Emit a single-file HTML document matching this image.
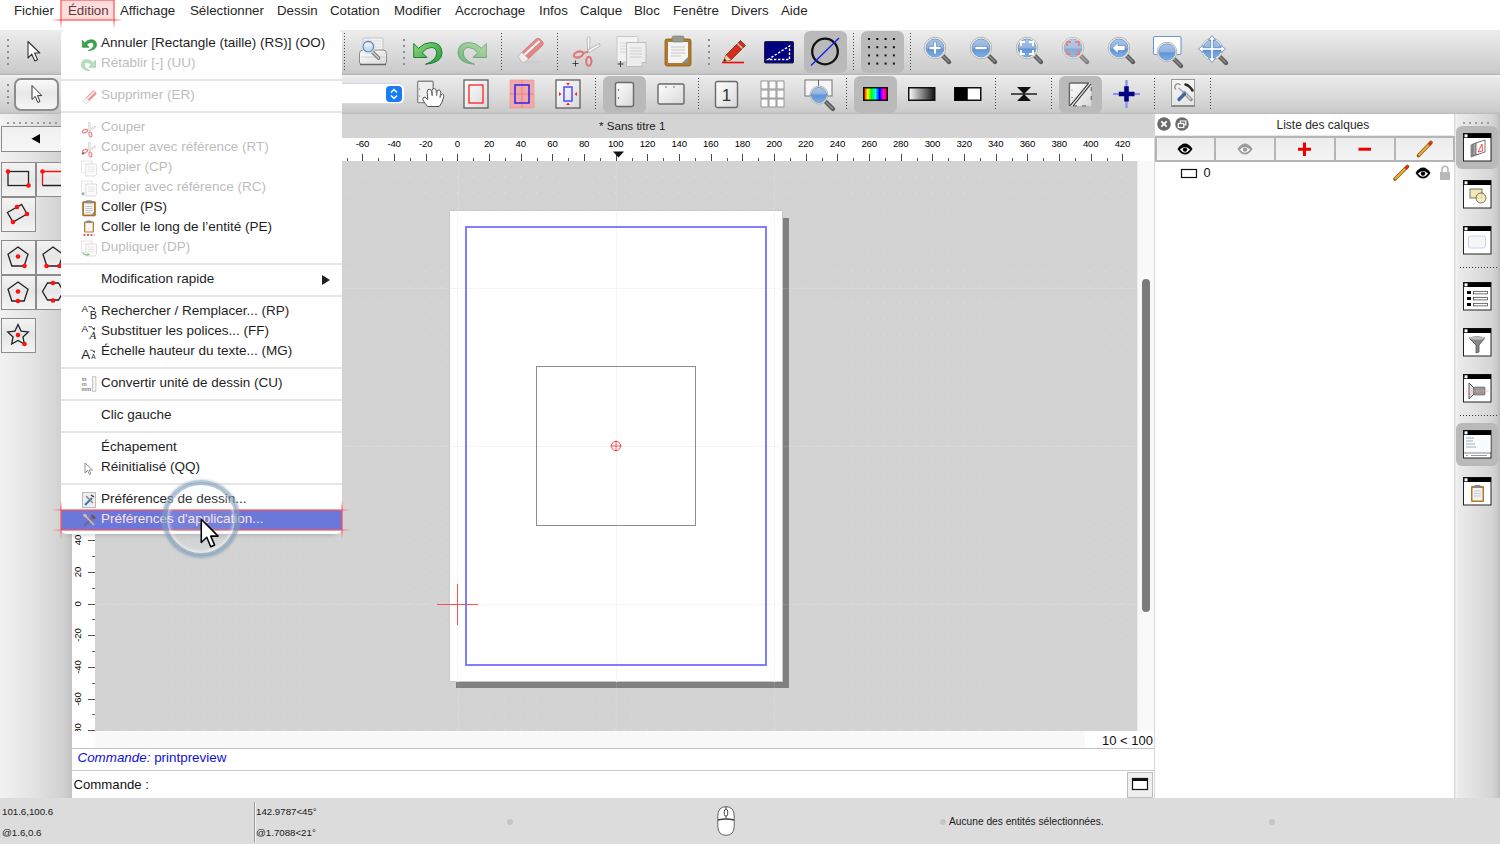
<!DOCTYPE html><html><head><meta charset="utf-8"><style>
*{margin:0;padding:0;box-sizing:border-box}
html,body{width:1500px;height:844px;overflow:hidden;background:#e6e6e6;font-family:"Liberation Sans",sans-serif;position:relative}
.a{position:absolute}
svg{position:absolute;overflow:visible}
.t{position:absolute;white-space:pre;line-height:1}
</style></head><body><div class="a" style="left:0px;top:0px;width:1500px;height:30px;background:#fff"></div><div class="a" style="left:0px;top:30px;width:1500px;height:45px;background:linear-gradient(#ededed,#dfdfdf 40%,#cdcdcd 90%,#c4c4c4);border-bottom:1px solid #b3b3b3"></div><div class="a" style="left:0px;top:75px;width:1500px;height:39px;background:linear-gradient(#f4f4f4,#e9e9e9 8%,#dcdcdc 50%,#cbcbcb 94%,#b9b9b9)"></div><svg style="left:0px;top:0px;" width="1" height="1" viewBox="0 0 1 1"><defs><linearGradient id="lg" x1="0" y1="0" x2="0" y2="1"><stop offset="0" stop-color="#a9c4e8"/><stop offset=".5" stop-color="#8fb2e0"/><stop offset=".55" stop-color="#5f93d6"/><stop offset="1" stop-color="#7fb0ea"/></linearGradient><linearGradient id="pg" x1="0" y1="0" x2="1" y2="1"><stop offset="0" stop-color="#fff"/><stop offset="1" stop-color="#d8d8d8"/></linearGradient></defs></svg><div class="a" style="left:7px;top:39px;width:2px;height:2px;background:#8d8d8d"></div><div class="a" style="left:7px;top:45px;width:2px;height:2px;background:#8d8d8d"></div><div class="a" style="left:7px;top:51px;width:2px;height:2px;background:#8d8d8d"></div><div class="a" style="left:7px;top:57px;width:2px;height:2px;background:#8d8d8d"></div><div class="a" style="left:7px;top:63px;width:2px;height:2px;background:#8d8d8d"></div><svg style="left:25px;top:40px;" width="16" height="24" viewBox="0 0 16 24"><path d="M3 1.5 L3 18 L6.8 14.2 L9.8 21 L12.6 19.8 L9.6 13 L14.8 13Z" fill="#fff" stroke="#333" stroke-width="1.1" stroke-linejoin="round"/></svg><div class="a" style="left:344px;top:33px;width:1px;height:39px;background:repeating-linear-gradient(#222 0 1px,transparent 1px 3px);opacity:.8"></div><div class="a" style="left:501px;top:33px;width:1px;height:39px;background:repeating-linear-gradient(#222 0 1px,transparent 1px 3px);opacity:.8"></div><div class="a" style="left:557px;top:33px;width:1px;height:39px;background:repeating-linear-gradient(#222 0 1px,transparent 1px 3px);opacity:.8"></div><div class="a" style="left:853px;top:33px;width:1px;height:39px;background:repeating-linear-gradient(#222 0 1px,transparent 1px 3px);opacity:.8"></div><div class="a" style="left:910px;top:33px;width:1px;height:39px;background:repeating-linear-gradient(#222 0 1px,transparent 1px 3px);opacity:.8"></div><div class="a" style="left:403px;top:39px;width:2px;height:2px;background:#8d8d8d"></div><div class="a" style="left:403px;top:45px;width:2px;height:2px;background:#8d8d8d"></div><div class="a" style="left:403px;top:51px;width:2px;height:2px;background:#8d8d8d"></div><div class="a" style="left:403px;top:57px;width:2px;height:2px;background:#8d8d8d"></div><div class="a" style="left:403px;top:63px;width:2px;height:2px;background:#8d8d8d"></div><div class="a" style="left:708px;top:39px;width:2px;height:2px;background:#8d8d8d"></div><div class="a" style="left:708px;top:45px;width:2px;height:2px;background:#8d8d8d"></div><div class="a" style="left:708px;top:51px;width:2px;height:2px;background:#8d8d8d"></div><div class="a" style="left:708px;top:57px;width:2px;height:2px;background:#8d8d8d"></div><div class="a" style="left:708px;top:63px;width:2px;height:2px;background:#8d8d8d"></div><div class="a" style="left:804px;top:31px;width:43px;height:42px;background:#bababa;border-radius:6px"></div><div class="a" style="left:861px;top:31px;width:43px;height:42px;background:#bababa;border-radius:6px"></div><svg style="left:357px;top:35px;" width="32" height="32" viewBox="0 0 32 32"><rect x="6" y="3" width="20" height="15" rx="1.5" fill="#f2f2f2" stroke="#c4c4c4"/><path d="M16 6h8 M16 9h8 M16 12h8" stroke="#ddd"/><path d="M2.5 18.5 Q2.5 15 6 15 L26 15 Q29.5 15 29.5 18.5 L29.5 27 Q29.5 29.5 27 29.5 L5 29.5 Q2.5 29.5 2.5 27Z" fill="url(#pg)" stroke="#8c8c8c"/><path d="M4 22 H28" stroke="#cfcfcf"/><path d="M3 29.5 H29" stroke="#666" stroke-width="1.5"/><line x1="15" y1="16.5" x2="21.5" y2="23" stroke="#666" stroke-width="3.6" stroke-linecap="round"/><line x1="15" y1="16.5" x2="21.5" y2="23" stroke="#c4c4c4" stroke-width="2" stroke-linecap="round"/><circle cx="11.3" cy="11.7" r="6.6" fill="#fafafa" stroke="#d0d0d0" stroke-width=".8"/><circle cx="11.3" cy="11.7" r="5.3" fill="#c9daf0" stroke="#4f86cc" stroke-width="1.1"/><ellipse cx="11" cy="10" rx="3.5" ry="2.2" fill="#e6eef8"/></svg><svg style="left:411px;top:37px;" width="32" height="30" viewBox="0 0 32 30"><defs><linearGradient id="ug" x1="0" y1="0" x2="1" y2="1"><stop offset="0" stop-color="#8fd77a"/><stop offset="1" stop-color="#1f9a3a"/></linearGradient></defs><path d="M2.7 6.5 L2.7 20.5 L16 20.5 L11.3 15.8 Q15.5 10.5 20 10.5 Q25.5 10.5 25.7 16 Q25.7 23 14.5 27.3 Q30.8 26 31 16 Q31 5.7 20 5.5 Q13 5.5 7.5 11.3Z" fill="url(#ug)" stroke="#16772c" stroke-width=".9" stroke-linejoin="round"/></svg><svg style="left:457px;top:37px;" width="32" height="30" viewBox="0 0 32 30"><g opacity=".55" transform="translate(32 0) scale(-1 1)"><path d="M2.7 6.5 L2.7 20.5 L16 20.5 L11.3 15.8 Q15.5 10.5 20 10.5 Q25.5 10.5 25.7 16 Q25.7 23 14.5 27.3 Q30.8 26 31 16 Q31 5.7 20 5.5 Q13 5.5 7.5 11.3Z" fill="url(#ug)" stroke="#16772c" stroke-width=".9" stroke-linejoin="round"/></g></svg><svg style="left:514px;top:36px;" width="32" height="30" viewBox="0 0 32 30"><g opacity=".75"><ellipse cx="17" cy="26" rx="12" ry="1.5" fill="#ccc"/><path d="M4 20 L22 3 Q24 1.5 26 3 L29 6 Q30 8 28.5 9.5 L11 26Z" fill="#e36a6a" stroke="#b34" stroke-width=".5"/><path d="M7.5 21.5 L25.5 5" stroke="#fff" stroke-width="2.2"/><path d="M4 20 L8 16.5 L14.5 23 L11 26 Q9.5 27 8 26Z" fill="#f6f6f6" stroke="#aaa" stroke-width=".6"/></g></svg><svg style="left:570px;top:35px;" width="32" height="34" viewBox="0 0 32 34"><g opacity=".9"><path d="M17 2.5 Q18.5 1.2 20 2.5 L19.6 16.5 L17.6 17Z" fill="#fbfbfb" stroke="#a8a8a8" stroke-width=".8"/><path d="M18 15 L29.5 8.5 L30 11 L19 17.5Z" fill="#fbfbfb" stroke="#a8a8a8" stroke-width=".8"/><ellipse cx="8.5" cy="19.5" rx="4.8" ry="2.8" transform="rotate(-18 8.5 19.5)" fill="none" stroke="#e07070" stroke-width="2.2"/><path d="M12.5 18 L18 17" stroke="#e07070" stroke-width="2"/><ellipse cx="18.8" cy="26.3" rx="2.6" ry="4.5" fill="none" stroke="#e07070" stroke-width="2.2"/></g><path d="M2.5 28.5 h6 M5.5 25.5 v6" stroke="#333" stroke-width=".9"/></svg><svg style="left:615px;top:35px;" width="34" height="34" viewBox="0 0 34 34"><g opacity=".85"><path d="M2 1.5 H22 L23 2.5 V27 H2Z" fill="#f6f6f6" stroke="#c4c4c4"/><path d="M5 8h14 M5 11h14 M5 14h14 M5 17h14" stroke="#d8d8d8"/><path d="M11.5 7.5 H31 V27.5 L27 31.5 H11.5Z" fill="#f2f2f2" stroke="#b6b6b6"/><path d="M27 31.5 V27.5 H31" fill="#ddd" stroke="#b6b6b6"/><path d="M15 13h12 M15 16h12 M15 19h12 M15 22h12" stroke="#cdcdcd"/></g><path d="M2.5 29 h6 M5.5 26 v6" stroke="#333" stroke-width=".9"/></svg><svg style="left:663px;top:35px;" width="30" height="32" viewBox="0 0 30 32"><rect x="2" y="4" width="26" height="27" rx="2" fill="#b07a2a" stroke="#8a5c18" stroke-width=".8"/><rect x="5" y="7" width="20" height="21" fill="#f4f4f4"/><path d="M8 12h14 M8 15h14 M8 18h14 M8 21h10" stroke="#c8c8c8"/><path d="M19 28 L25 22 L25 28Z" fill="#8a8a8a"/><rect x="9" y="1" width="12" height="6" rx="1.5" fill="#9a9a8a" stroke="#777" stroke-width=".6"/></svg><svg style="left:720px;top:40px;" width="28" height="26" viewBox="0 0 28 26"><path d="M2 22.5 h22" stroke="#f00" stroke-width="1.6"/><path d="M3.5 20.5 L6 14 L20.5 -0.5 L25.5 4.5 L11 19Z" fill="#d62b20" stroke="#6b3a10" stroke-width=".8" transform="translate(0 1)"/><path d="M3.5 21.5 L6 15 L11 20Z" fill="#f2d0a0"/><path d="M3.5 21.5 L4.5 18.5 L6.5 20.5Z" fill="#222"/><path d="M17.5 3.5 L22.5 8.5" stroke="#ccc" stroke-width="1.5"/></svg><svg style="left:764px;top:41px;" width="30" height="23" viewBox="0 0 30 23"><rect x=".5" y=".5" width="29" height="21.5" rx="1" fill="#000080" stroke="#223"/><path d="M4 18.5 L25.5 5 L25.5 18.5Z" fill="none" stroke="#fff" stroke-width="1.4" stroke-dasharray="2.4 1.6"/></svg><svg style="left:808px;top:35px;" width="34" height="34" viewBox="0 0 34 34"><circle cx="17" cy="16.5" r="12.8" fill="none" stroke="#111" stroke-width="2.3"/><line x1="3" y1="30.5" x2="31" y2="3" stroke="#1020f0" stroke-width="1.3"/></svg><svg style="left:868px;top:38px;" width="40" height="34" viewBox="0 0 40 34"><rect x="0.0" y="0.0" width="2" height="2" fill="#111"/><rect x="0.0" y="8.2" width="2" height="2" fill="#111"/><rect x="0.0" y="16.4" width="2" height="2" fill="#111"/><rect x="0.0" y="24.6" width="2" height="2" fill="#111"/><rect x="8.3" y="0.0" width="2" height="2" fill="#111"/><rect x="8.3" y="8.2" width="2" height="2" fill="#111"/><rect x="8.3" y="16.4" width="2" height="2" fill="#111"/><rect x="8.3" y="24.6" width="2" height="2" fill="#111"/><rect x="16.6" y="0.0" width="2" height="2" fill="#111"/><rect x="16.6" y="8.2" width="2" height="2" fill="#111"/><rect x="16.6" y="16.4" width="2" height="2" fill="#111"/><rect x="16.6" y="24.6" width="2" height="2" fill="#111"/><rect x="24.9" y="0.0" width="2" height="2" fill="#111"/><rect x="24.9" y="8.2" width="2" height="2" fill="#111"/><rect x="24.9" y="16.4" width="2" height="2" fill="#111"/><rect x="24.9" y="24.6" width="2" height="2" fill="#111"/></svg><svg style="left:921px;top:35px;" width="32" height="32" viewBox="0 0 32 32"><line x1="21" y1="20" x2="28" y2="27" stroke="#5a5a5a" stroke-width="4.4" stroke-linecap="round"/><line x1="21.5" y1="20.5" x2="27.5" y2="26.5" stroke="#8e8e8e" stroke-width="1.6" stroke-linecap="round"/><circle cx="14" cy="13" r="10.8" fill="#eeeeea" stroke="#b8b8b0" stroke-width="1"/><circle cx="14" cy="13" r="9" fill="url(#lg)" stroke="#6b95c8" stroke-width=".8"/><g transform="translate(14 13)"><path d="M-6 -1.5 h4.5 v-4.5 h3 v4.5 h4.5 v3 h-4.5 v4.5 h-3 v-4.5 h-4.5Z" fill="#fff" stroke="#3a6ab0" stroke-width=".5"/></g></svg><svg style="left:967px;top:35px;" width="32" height="32" viewBox="0 0 32 32"><line x1="21" y1="20" x2="28" y2="27" stroke="#5a5a5a" stroke-width="4.4" stroke-linecap="round"/><line x1="21.5" y1="20.5" x2="27.5" y2="26.5" stroke="#8e8e8e" stroke-width="1.6" stroke-linecap="round"/><circle cx="14" cy="13" r="10.8" fill="#eeeeea" stroke="#b8b8b0" stroke-width="1"/><circle cx="14" cy="13" r="9" fill="url(#lg)" stroke="#6b95c8" stroke-width=".8"/><g transform="translate(14 13)"><rect x="-6" y="-1.6" width="12" height="3.2" fill="#fff" stroke="#3a6ab0" stroke-width=".5"/></g></svg><svg style="left:1013px;top:35px;" width="32" height="32" viewBox="0 0 32 32"><line x1="21" y1="20" x2="28" y2="27" stroke="#5a5a5a" stroke-width="4.4" stroke-linecap="round"/><line x1="21.5" y1="20.5" x2="27.5" y2="26.5" stroke="#8e8e8e" stroke-width="1.6" stroke-linecap="round"/><circle cx="14" cy="13" r="10.8" fill="#eeeeea" stroke="#b8b8b0" stroke-width="1"/><circle cx="14" cy="13" r="9" fill="url(#lg)" stroke="#6b95c8" stroke-width=".8"/><g transform="translate(14 13)"><path d="M-6 -2 v-4 h4 M2 -6 h4 v4 M6 2 v4 h-4 M-2 6 h-4 v-4" fill="none" stroke="#fff" stroke-width="2"/></g></svg><svg style="left:1059px;top:35px;" width="32" height="32" viewBox="0 0 32 32"><g opacity=".7"><line x1="21" y1="20" x2="28" y2="27" stroke="#5a5a5a" stroke-width="4.4" stroke-linecap="round"/><line x1="21.5" y1="20.5" x2="27.5" y2="26.5" stroke="#8e8e8e" stroke-width="1.6" stroke-linecap="round"/><circle cx="14" cy="13" r="10.8" fill="#eeeeea" stroke="#b8b8b0" stroke-width="1"/><circle cx="14" cy="13" r="9" fill="url(#lg)" stroke="#6b95c8" stroke-width=".8"/><g transform="translate(14 13)"><path d="M-6 -2 v-4 h4 M2 -6 h4 v4 M6 2 v4 h-4 M-2 6 h-4 v-4" fill="none" stroke="#e46060" stroke-width="2"/></g></g></svg><svg style="left:1105px;top:35px;" width="32" height="32" viewBox="0 0 32 32"><line x1="21" y1="20" x2="28" y2="27" stroke="#5a5a5a" stroke-width="4.4" stroke-linecap="round"/><line x1="21.5" y1="20.5" x2="27.5" y2="26.5" stroke="#8e8e8e" stroke-width="1.6" stroke-linecap="round"/><circle cx="14" cy="13" r="10.8" fill="#eeeeea" stroke="#b8b8b0" stroke-width="1"/><circle cx="14" cy="13" r="9" fill="url(#lg)" stroke="#6b95c8" stroke-width=".8"/><g transform="translate(14 13)"><path d="M-6.5 0 L-1 -5.5 L-1 -2.5 L6 -2.5 L6 2.5 L-1 2.5 L-1 5.5Z" fill="#fff" stroke="#3a6ab0" stroke-width=".5"/></g></svg><svg style="left:1151px;top:35px;" width="32" height="32" viewBox="0 0 32 32"><rect x="2.5" y="1.5" width="27.5" height="18" rx="1.5" fill="#fff" stroke="#6a98d4" stroke-width="1.1"/><line x1="23" y1="24" x2="30" y2="31" stroke="#5a5a5a" stroke-width="4.4" stroke-linecap="round"/><line x1="23.5" y1="24.5" x2="29.5" y2="30.5" stroke="#8e8e8e" stroke-width="1.6" stroke-linecap="round"/><circle cx="16" cy="17" r="9.8" fill="#eeeeea" stroke="#b8b8b0" stroke-width="1"/><circle cx="16" cy="17" r="8.2" fill="url(#lg)" stroke="#6b95c8" stroke-width=".8"/></svg><svg style="left:1197px;top:35px;" width="32" height="32" viewBox="0 0 32 32"><line x1="22" y1="21" x2="29" y2="28" stroke="#5a5a5a" stroke-width="4.4" stroke-linecap="round"/><line x1="22.5" y1="21.5" x2="28.5" y2="27.5" stroke="#8e8e8e" stroke-width="1.6" stroke-linecap="round"/><circle cx="15" cy="14" r="10.8" fill="#eeeeea" stroke="#b8b8b0" stroke-width="1"/><circle cx="15" cy="14" r="9" fill="url(#lg)" stroke="#6b95c8" stroke-width=".8"/><g transform="translate(15 14)"><path d="M0 -13.5 L-3.5 -9 L-1.3 -9 L-1.3 -1.3 L-9 -1.3 L-9 -3.5 L-13.5 0 L-9 3.5 L-9 1.3 L-1.3 1.3 L-1.3 9 L-3.5 9 L0 13.5 L3.5 9 L1.3 9 L1.3 1.3 L9 1.3 L9 3.5 L13.5 0 L9 -3.5 L9 -1.3 L1.3 -1.3 L1.3 -9 L3.5 -9Z" fill="#fff" stroke="#4a7cc0" stroke-width=".7"/></g></svg><div class="a" style="left:7px;top:84px;width:2px;height:2px;background:#8d8d8d"></div><div class="a" style="left:7px;top:90px;width:2px;height:2px;background:#8d8d8d"></div><div class="a" style="left:7px;top:96px;width:2px;height:2px;background:#8d8d8d"></div><div class="a" style="left:7px;top:102px;width:2px;height:2px;background:#8d8d8d"></div><div class="a" style="left:14px;top:78px;width:45px;height:33px;border:2px solid #8c8c8c;border-radius:7px;background:linear-gradient(#fafafa,#e8e8e8 45%,#f6f6f6)"></div><svg style="left:30px;top:84px;" width="14" height="22" viewBox="0 0 14 22"><path d="M2 1.5 L2 15.5 L5.2 12.4 L7.8 18.5 L10 17.5 L7.5 11.6 L11.8 11.6Z" fill="#fff" stroke="#333" stroke-width="1" stroke-linejoin="round"/></svg><div class="a" style="left:330px;top:83px;width:74px;height:21px;background:#fff;border-radius:5px;border-top:1px solid #cfd8e2;border-bottom:1px solid #d6dde5"></div><div class="a" style="left:386px;top:86px;width:16px;height:16px;background:#1a7cf5;border-radius:4px"></div><svg style="left:386px;top:86px;" width="16" height="16" viewBox="0 0 16 16"><path d="M5 6.5 L8 3.5 L11 6.5 M5 9.5 L8 12.5 L11 9.5" fill="none" stroke="#fff" stroke-width="1.5"/></svg><div class="a" style="left:595px;top:78px;width:1px;height:33px;background:repeating-linear-gradient(#222 0 1px,transparent 1px 3px);opacity:.8"></div><div class="a" style="left:698px;top:78px;width:1px;height:33px;background:repeating-linear-gradient(#222 0 1px,transparent 1px 3px);opacity:.8"></div><div class="a" style="left:846px;top:78px;width:1px;height:33px;background:repeating-linear-gradient(#222 0 1px,transparent 1px 3px);opacity:.8"></div><div class="a" style="left:995px;top:78px;width:1px;height:33px;background:repeating-linear-gradient(#222 0 1px,transparent 1px 3px);opacity:.8"></div><div class="a" style="left:1051px;top:78px;width:1px;height:33px;background:repeating-linear-gradient(#222 0 1px,transparent 1px 3px);opacity:.8"></div><div class="a" style="left:1154px;top:78px;width:1px;height:33px;background:repeating-linear-gradient(#222 0 1px,transparent 1px 3px);opacity:.8"></div><div class="a" style="left:1210px;top:78px;width:1px;height:33px;background:repeating-linear-gradient(#222 0 1px,transparent 1px 3px);opacity:.8"></div><div class="a" style="left:603px;top:76px;width:43px;height:37px;background:#bababa;border-radius:6px"></div><div class="a" style="left:854px;top:76px;width:43px;height:37px;background:#bababa;border-radius:6px"></div><div class="a" style="left:1059px;top:76px;width:43px;height:37px;background:#bababa;border-radius:6px"></div><svg style="left:416px;top:80px;" width="30" height="30" viewBox="0 0 30 30"><rect x="1.6" y="1.2" width="15.6" height="21.4" rx="1" fill="#eeeeee" stroke="#8a8a8a" stroke-width="1.4"/><circle cx="3.6" cy="9" r=".6" fill="#555"/><circle cx="3.6" cy="16" r=".6" fill="#555"/><path d="M11.5 26.5 Q7.5 21.5 6.8 19.5 Q6.6 16.8 9 17.2 L11.8 19.5 L11.2 12.2 Q11 9.2 13.2 9.2 Q15.3 9.2 15.6 11.6 L16.2 15.5 L16 10.6 Q16 8.6 18 8.6 Q20 8.6 20.2 10.6 L20.6 15.5 L21 11.8 Q21.3 9.8 23.1 10 Q24.9 10.4 24.7 12.6 L24.1 17.5 Q25 13.6 26.6 13.9 Q28.2 14.3 27.7 16.8 Q26.6 22.5 23.3 26.5Z" fill="#fff" stroke="#555" stroke-width="1"/><path d="M15.6 11.6 L16.2 15.5 M20.2 10.6 L20.6 15.5 M24.7 12.6 L24.1 17.5" stroke="#888" stroke-width=".8"/></svg><svg style="left:463px;top:79px;" width="26" height="30" viewBox="0 0 26 30"><rect x="1" y="1" width="24" height="28" fill="url(#pg)" stroke="#555" stroke-width="1.2"/><rect x="6" y="6" width="14" height="18" fill="none" stroke="#f22" stroke-width="1.3"/></svg><svg style="left:509px;top:79px;" width="26" height="30" viewBox="0 0 26 30"><rect x="1" y="1" width="24" height="28" fill="#f2a8a8" stroke="#d98" stroke-width=".6"/><path d="M13 1 V29 M1 15 H25" stroke="#d88" stroke-width="1"/><rect x="6" y="6" width="14" height="18" fill="none" stroke="#1a1af0" stroke-width="1.4"/></svg><svg style="left:555px;top:79px;" width="26" height="30" viewBox="0 0 26 30"><rect x="1" y="1" width="24" height="28" fill="url(#pg)" stroke="#555" stroke-width="1.2"/><rect x="9" y="8" width="8" height="14" fill="none" stroke="#55f" stroke-width="1.6"/><path d="M11 4 h4 l-2 2.5Z M11 26 h4 l-2 -2.5Z M4 13 v4 l2.5 -2Z M22 13 v4 l-2.5 -2Z" fill="#f22"/></svg><svg style="left:614px;top:81px;" width="22" height="27" viewBox="0 0 22 27"><rect x="1.5" y="1.5" width="18" height="24" rx="2" fill="url(#pg)" stroke="#6a6a6a" stroke-width="1.4"/><circle cx="4.5" cy="9" r=".7" fill="#444"/><circle cx="4.5" cy="17" r=".7" fill="#444"/></svg><svg style="left:657px;top:83px;" width="28" height="22" viewBox="0 0 28 22"><rect x="1" y="1" width="26" height="20" rx="1.5" fill="url(#pg)" stroke="#6a6a6a" stroke-width="1.4"/><circle cx="9" cy="4" r=".7" fill="#444"/><circle cx="17" cy="4" r=".7" fill="#444"/></svg><svg style="left:714px;top:80px;" width="26" height="29" viewBox="0 0 26 29"><rect x="1.5" y="1.5" width="22" height="26" rx="2" fill="url(#pg)" stroke="#6a6a6a" stroke-width="1.4"/><text x="12.5" y="21" text-anchor="middle" font-family="Liberation Sans" font-size="17" fill="#333">1</text></svg><svg style="left:760px;top:80px;" width="26" height="29" viewBox="0 0 26 29"><rect x="1" y="1" width="7" height="8" fill="#fafafa" stroke="#8f8f8f" stroke-width=".9"/><rect x="1" y="10" width="7" height="8" fill="#fafafa" stroke="#8f8f8f" stroke-width=".9"/><rect x="1" y="19" width="7" height="8" fill="#fafafa" stroke="#8f8f8f" stroke-width=".9"/><rect x="9" y="1" width="7" height="8" fill="#fafafa" stroke="#8f8f8f" stroke-width=".9"/><rect x="9" y="10" width="7" height="8" fill="#fafafa" stroke="#8f8f8f" stroke-width=".9"/><rect x="9" y="19" width="7" height="8" fill="#fafafa" stroke="#8f8f8f" stroke-width=".9"/><rect x="17" y="1" width="7" height="8" fill="#fafafa" stroke="#8f8f8f" stroke-width=".9"/><rect x="17" y="10" width="7" height="8" fill="#fafafa" stroke="#8f8f8f" stroke-width=".9"/><rect x="17" y="19" width="7" height="8" fill="#fafafa" stroke="#8f8f8f" stroke-width=".9"/></svg><svg style="left:804px;top:79px;" width="32" height="32" viewBox="0 0 32 32"><rect x="1" y="1" width="27" height="16" fill="#f6f6f6" stroke="#666" stroke-width=".9"/><path d="M14.5 1 V17" stroke="#666"/><line x1="22" y1="23" x2="29" y2="30" stroke="#5a5a5a" stroke-width="4.4" stroke-linecap="round"/><line x1="22.5" y1="23.5" x2="28.5" y2="29.5" stroke="#8e8e8e" stroke-width="1.6" stroke-linecap="round"/><circle cx="15" cy="16" r="9" fill="#eeeeea" stroke="#b8b8b0" stroke-width="1"/><circle cx="15" cy="16" r="7.6" fill="url(#lg)" stroke="#6b95c8" stroke-width=".8"/><path d="M6 16 h18" stroke="#5d8fd0" stroke-width="1"/></svg><svg style="left:863px;top:87px;" width="25" height="15" viewBox="0 0 25 15"><defs><linearGradient id="sp"><stop offset="0" stop-color="#f00"/><stop offset=".17" stop-color="#ff0"/><stop offset=".33" stop-color="#0f0"/><stop offset=".5" stop-color="#0ff"/><stop offset=".67" stop-color="#00f"/><stop offset=".83" stop-color="#f0f"/><stop offset="1" stop-color="#f00"/></linearGradient></defs><rect x=".75" y=".75" width="23.5" height="12.5" fill="url(#sp)" stroke="#111" stroke-width="1.5"/></svg><svg style="left:908px;top:87px;" width="28" height="15" viewBox="0 0 28 15"><defs><linearGradient id="gr"><stop offset="0" stop-color="#fff"/><stop offset="1" stop-color="#111"/></linearGradient></defs><rect x=".75" y=".75" width="26" height="12.5" fill="url(#gr)" stroke="#111" stroke-width="1.5"/></svg><svg style="left:954px;top:87px;" width="28" height="15" viewBox="0 0 28 15"><rect x=".75" y=".75" width="26" height="12.5" fill="#fff" stroke="#111" stroke-width="1.5"/><rect x=".75" y=".75" width="13" height="12.5" fill="#000"/></svg><svg style="left:1010px;top:85px;" width="28" height="18" viewBox="0 0 28 18"><path d="M1 9 H27" stroke="#111" stroke-width="1.4"/><path d="M7 2 H21 L14 9 L21 16 H7 L14 9Z" fill="#111"/></svg><svg style="left:1068px;top:82px;" width="26" height="26" viewBox="0 0 26 26"><rect x="1.4" y="1" width="21.9" height="22.9" rx="1.5" fill="url(#pg)"/><path d="M1.4 23.9 V2.5 Q1.4 1 3 1 H21" fill="none" stroke="#666" stroke-width="1.4"/><path d="M23.3 5 V9 M23.3 14 V18 M18 23.9 H14 M9 23.9 H5" stroke="#777" stroke-width="1.4"/><path d="M2.2 23.6 L20.5 1.3 M5 24 L23 1.8" stroke="#333" stroke-width="1.1"/><circle cx="4" cy="8" r=".6" fill="#444"/><circle cx="4" cy="15.5" r=".6" fill="#444"/></svg><svg style="left:1112px;top:79px;" width="30" height="30" viewBox="0 0 30 30"><path d="M14.5 1 V29 M1 15 H28" stroke="#8c8cf6" stroke-width="2.2"/><path d="M14.5 7.3 V22.5 M6.8 15 H22.5" stroke="#000080" stroke-width="4.6"/></svg><div class="a" style="left:1171px;top:79px;width:24px;height:28px;background:linear-gradient(#f6f6f6,#e6e6e6);border:1px solid #9a9a9a;border-bottom:2px solid #8a8a8a"></div><svg style="left:1170px;top:78px;" width="27" height="30" viewBox="0 0 27 30"><line x1="14" y1="14.5" x2="21" y2="21.5" stroke="#8a8a8a" stroke-width="3.4" stroke-linecap="round"/><line x1="14" y1="14.5" x2="21" y2="21.5" stroke="#c8c8c8" stroke-width="2"/><path d="M15.5 6.5 Q19.5 7.5 22.5 12.5" fill="none" stroke="#2d2d2d" stroke-width="2.6" stroke-linecap="round"/><line x1="8.5" y1="10" x2="15" y2="15.5" stroke="#aaa" stroke-width="1.6"/><path d="M6 11.5 A3.2 3.2 0 1 1 10.5 7" fill="none" stroke="#999" stroke-width="1.6"/><line x1="9" y1="21.5" x2="14.5" y2="16" stroke="#3b66a8" stroke-width="3.2" stroke-linecap="round"/></svg><div class="a" style="left:0px;top:114px;width:72px;height:684px;background:linear-gradient(90deg,#f2f2f2,#e2e2e2 50%,#cfcfcf 90%,#c3c3c3)"></div><div class="a" style="left:72px;top:114px;width:1082px;height:24px;background:#d4d4d4"></div><div class="t" style="left:599px;top:119.87px;font-size:11.6px;color:#1a1a1a;">* Sans titre 1</div><div class="a" style="left:72px;top:138px;width:1082px;height:23px;background:#fff"></div><div class="a" style="left:72px;top:161px;width:23px;height:570px;background:#fff"></div><div class="a" style="left:95px;top:161px;width:1042px;height:570px;background:#d3d3d3"></div><div class="a" style="left:95px;top:161px;width:1042px;height:570px;background-image:radial-gradient(circle at 0.5px 0.5px,#e2e2e2 0.6px,transparent 0.8px);background-size:15.8125px 15.8125px;background-position:14.02px 15.16px"></div><div class="a" style="left:456px;top:218px;width:333px;height:470px;background:#808080"></div><div class="a" style="left:450px;top:211px;width:332px;height:470px;background:#fff;box-shadow:0 0 0 1px #c9c9c9"></div><div class="a" style="left:458px;top:161px;width:1px;height:570px;background:rgba(255,255,255,.1)"></div><div class="a" style="left:616px;top:161px;width:1px;height:570px;background:rgba(255,255,255,.1)"></div><div class="a" style="left:774px;top:161px;width:1px;height:570px;background:rgba(255,255,255,.1)"></div><div class="a" style="left:95px;top:288px;width:1042px;height:1px;background:rgba(255,255,255,.1)"></div><div class="a" style="left:95px;top:446px;width:1042px;height:1px;background:rgba(255,255,255,.1)"></div><div class="a" style="left:95px;top:604px;width:1042px;height:1px;background:rgba(255,255,255,.1)"></div><div class="a" style="left:457px;top:211px;width:1px;height:471px;background:#f5f5f5"></div><div class="a" style="left:616px;top:211px;width:1px;height:471px;background:#f5f5f5"></div><div class="a" style="left:774px;top:211px;width:1px;height:471px;background:#f5f5f5"></div><div class="a" style="left:450px;top:288px;width:332px;height:1px;background:#f5f5f5"></div><div class="a" style="left:450px;top:446px;width:332px;height:1px;background:#f5f5f5"></div><div class="a" style="left:450px;top:604px;width:332px;height:1px;background:#f5f5f5"></div><div class="a" style="left:465px;top:226px;width:302px;height:440px;border:2px solid #7e7eff"></div><div class="a" style="left:536px;top:366px;width:160px;height:160px;border:1.2px solid #8c8c8c"></div><svg style="left:609px;top:439px;" width="14" height="14" viewBox="0 0 14 14"><circle cx="7" cy="7" r="4.6" fill="none" stroke="#f04a4a" stroke-width="1"/><path d="M7 1.5 V12.5 M1.5 7 H12.5" stroke="#f04a4a" stroke-width=".9"/></svg><div class="a" style="left:437px;top:604px;width:41px;height:1px;background:#f25555"></div><div class="a" style="left:457px;top:584px;width:1px;height:41px;background:#f25555"></div><div class="a" style="left:331px;top:154px;width:1px;height:7px;background:#4a4a4a"></div><div class="t" style="left:300.7px;width:60px;text-align:center;top:139.1px;font-size:9.6px;color:#000;letter-spacing:-.2px">-80</div><div class="a" style="left:347px;top:158px;width:1px;height:3px;background:#5a5a5a"></div><div class="a" style="left:362px;top:154px;width:1px;height:7px;background:#4a4a4a"></div><div class="t" style="left:332.4px;width:60px;text-align:center;top:139.1px;font-size:9.6px;color:#000;letter-spacing:-.2px">-60</div><div class="a" style="left:378px;top:158px;width:1px;height:3px;background:#5a5a5a"></div><div class="a" style="left:394px;top:154px;width:1px;height:7px;background:#4a4a4a"></div><div class="t" style="left:364.1px;width:60px;text-align:center;top:139.1px;font-size:9.6px;color:#000;letter-spacing:-.2px">-40</div><div class="a" style="left:410px;top:158px;width:1px;height:3px;background:#5a5a5a"></div><div class="a" style="left:426px;top:154px;width:1px;height:7px;background:#4a4a4a"></div><div class="t" style="left:395.7px;width:60px;text-align:center;top:139.1px;font-size:9.6px;color:#000;letter-spacing:-.2px">-20</div><div class="a" style="left:442px;top:158px;width:1px;height:3px;background:#5a5a5a"></div><div class="a" style="left:457px;top:154px;width:1px;height:7px;background:#4a4a4a"></div><div class="t" style="left:427.4px;width:60px;text-align:center;top:139.1px;font-size:9.6px;color:#000;letter-spacing:-.2px">0</div><div class="a" style="left:473px;top:158px;width:1px;height:3px;background:#5a5a5a"></div><div class="a" style="left:489px;top:154px;width:1px;height:7px;background:#4a4a4a"></div><div class="t" style="left:459.1px;width:60px;text-align:center;top:139.1px;font-size:9.6px;color:#000;letter-spacing:-.2px">20</div><div class="a" style="left:505px;top:158px;width:1px;height:3px;background:#5a5a5a"></div><div class="a" style="left:521px;top:154px;width:1px;height:7px;background:#4a4a4a"></div><div class="t" style="left:490.7px;width:60px;text-align:center;top:139.1px;font-size:9.6px;color:#000;letter-spacing:-.2px">40</div><div class="a" style="left:537px;top:158px;width:1px;height:3px;background:#5a5a5a"></div><div class="a" style="left:552px;top:154px;width:1px;height:7px;background:#4a4a4a"></div><div class="t" style="left:522.4px;width:60px;text-align:center;top:139.1px;font-size:9.6px;color:#000;letter-spacing:-.2px">60</div><div class="a" style="left:568px;top:158px;width:1px;height:3px;background:#5a5a5a"></div><div class="a" style="left:584px;top:154px;width:1px;height:7px;background:#4a4a4a"></div><div class="t" style="left:554.1px;width:60px;text-align:center;top:139.1px;font-size:9.6px;color:#000;letter-spacing:-.2px">80</div><div class="a" style="left:600px;top:158px;width:1px;height:3px;background:#5a5a5a"></div><div class="a" style="left:616px;top:154px;width:1px;height:7px;background:#4a4a4a"></div><div class="t" style="left:585.7px;width:60px;text-align:center;top:139.1px;font-size:9.6px;color:#000;letter-spacing:-.2px">100</div><div class="a" style="left:632px;top:158px;width:1px;height:3px;background:#5a5a5a"></div><div class="a" style="left:647px;top:154px;width:1px;height:7px;background:#4a4a4a"></div><div class="t" style="left:617.4px;width:60px;text-align:center;top:139.1px;font-size:9.6px;color:#000;letter-spacing:-.2px">120</div><div class="a" style="left:663px;top:158px;width:1px;height:3px;background:#5a5a5a"></div><div class="a" style="left:679px;top:154px;width:1px;height:7px;background:#4a4a4a"></div><div class="t" style="left:649.1px;width:60px;text-align:center;top:139.1px;font-size:9.6px;color:#000;letter-spacing:-.2px">140</div><div class="a" style="left:695px;top:158px;width:1px;height:3px;background:#5a5a5a"></div><div class="a" style="left:711px;top:154px;width:1px;height:7px;background:#4a4a4a"></div><div class="t" style="left:680.7px;width:60px;text-align:center;top:139.1px;font-size:9.6px;color:#000;letter-spacing:-.2px">160</div><div class="a" style="left:727px;top:158px;width:1px;height:3px;background:#5a5a5a"></div><div class="a" style="left:742px;top:154px;width:1px;height:7px;background:#4a4a4a"></div><div class="t" style="left:712.4px;width:60px;text-align:center;top:139.1px;font-size:9.6px;color:#000;letter-spacing:-.2px">180</div><div class="a" style="left:758px;top:158px;width:1px;height:3px;background:#5a5a5a"></div><div class="a" style="left:774px;top:154px;width:1px;height:7px;background:#4a4a4a"></div><div class="t" style="left:744.1px;width:60px;text-align:center;top:139.1px;font-size:9.6px;color:#000;letter-spacing:-.2px">200</div><div class="a" style="left:790px;top:158px;width:1px;height:3px;background:#5a5a5a"></div><div class="a" style="left:806px;top:154px;width:1px;height:7px;background:#4a4a4a"></div><div class="t" style="left:775.7px;width:60px;text-align:center;top:139.1px;font-size:9.6px;color:#000;letter-spacing:-.2px">220</div><div class="a" style="left:822px;top:158px;width:1px;height:3px;background:#5a5a5a"></div><div class="a" style="left:837px;top:154px;width:1px;height:7px;background:#4a4a4a"></div><div class="t" style="left:807.4px;width:60px;text-align:center;top:139.1px;font-size:9.6px;color:#000;letter-spacing:-.2px">240</div><div class="a" style="left:853px;top:158px;width:1px;height:3px;background:#5a5a5a"></div><div class="a" style="left:869px;top:154px;width:1px;height:7px;background:#4a4a4a"></div><div class="t" style="left:839.1px;width:60px;text-align:center;top:139.1px;font-size:9.6px;color:#000;letter-spacing:-.2px">260</div><div class="a" style="left:885px;top:158px;width:1px;height:3px;background:#5a5a5a"></div><div class="a" style="left:901px;top:154px;width:1px;height:7px;background:#4a4a4a"></div><div class="t" style="left:870.7px;width:60px;text-align:center;top:139.1px;font-size:9.6px;color:#000;letter-spacing:-.2px">280</div><div class="a" style="left:917px;top:158px;width:1px;height:3px;background:#5a5a5a"></div><div class="a" style="left:932px;top:154px;width:1px;height:7px;background:#4a4a4a"></div><div class="t" style="left:902.4px;width:60px;text-align:center;top:139.1px;font-size:9.6px;color:#000;letter-spacing:-.2px">300</div><div class="a" style="left:948px;top:158px;width:1px;height:3px;background:#5a5a5a"></div><div class="a" style="left:964px;top:154px;width:1px;height:7px;background:#4a4a4a"></div><div class="t" style="left:934.1px;width:60px;text-align:center;top:139.1px;font-size:9.6px;color:#000;letter-spacing:-.2px">320</div><div class="a" style="left:980px;top:158px;width:1px;height:3px;background:#5a5a5a"></div><div class="a" style="left:996px;top:154px;width:1px;height:7px;background:#4a4a4a"></div><div class="t" style="left:965.7px;width:60px;text-align:center;top:139.1px;font-size:9.6px;color:#000;letter-spacing:-.2px">340</div><div class="a" style="left:1012px;top:158px;width:1px;height:3px;background:#5a5a5a"></div><div class="a" style="left:1027px;top:154px;width:1px;height:7px;background:#4a4a4a"></div><div class="t" style="left:997.4px;width:60px;text-align:center;top:139.1px;font-size:9.6px;color:#000;letter-spacing:-.2px">360</div><div class="a" style="left:1043px;top:158px;width:1px;height:3px;background:#5a5a5a"></div><div class="a" style="left:1059px;top:154px;width:1px;height:7px;background:#4a4a4a"></div><div class="t" style="left:1029.1px;width:60px;text-align:center;top:139.1px;font-size:9.6px;color:#000;letter-spacing:-.2px">380</div><div class="a" style="left:1075px;top:158px;width:1px;height:3px;background:#5a5a5a"></div><div class="a" style="left:1091px;top:154px;width:1px;height:7px;background:#4a4a4a"></div><div class="t" style="left:1060.7px;width:60px;text-align:center;top:139.1px;font-size:9.6px;color:#000;letter-spacing:-.2px">400</div><div class="a" style="left:1107px;top:158px;width:1px;height:3px;background:#5a5a5a"></div><div class="a" style="left:1122px;top:154px;width:1px;height:7px;background:#4a4a4a"></div><div class="t" style="left:1092.4px;width:60px;text-align:center;top:139.1px;font-size:9.6px;color:#000;letter-spacing:-.2px">420</div><svg style="left:613px;top:151px;" width="12" height="7" viewBox="0 0 12 7"><path d="M0 .5 H11 L5.5 6.5Z" fill="#111"/></svg><div class="a" style="left:88px;top:730px;width:7px;height:1px;background:#555"></div><div class="t" style="left:48px;top:725.3px;width:60px;height:10px;text-align:center;font-size:9.6px;color:#000;letter-spacing:-.2px;transform:rotate(-90deg)">-80</div><div class="a" style="left:92px;top:714px;width:3px;height:1px;background:#666"></div><div class="a" style="left:88px;top:699px;width:7px;height:1px;background:#555"></div><div class="t" style="left:48px;top:693.6px;width:60px;height:10px;text-align:center;font-size:9.6px;color:#000;letter-spacing:-.2px;transform:rotate(-90deg)">-60</div><div class="a" style="left:92px;top:683px;width:3px;height:1px;background:#666"></div><div class="a" style="left:88px;top:667px;width:7px;height:1px;background:#555"></div><div class="t" style="left:48px;top:661.9px;width:60px;height:10px;text-align:center;font-size:9.6px;color:#000;letter-spacing:-.2px;transform:rotate(-90deg)">-40</div><div class="a" style="left:92px;top:651px;width:3px;height:1px;background:#666"></div><div class="a" style="left:88px;top:635px;width:7px;height:1px;background:#555"></div><div class="t" style="left:48px;top:630.3px;width:60px;height:10px;text-align:center;font-size:9.6px;color:#000;letter-spacing:-.2px;transform:rotate(-90deg)">-20</div><div class="a" style="left:92px;top:619px;width:3px;height:1px;background:#666"></div><div class="a" style="left:88px;top:604px;width:7px;height:1px;background:#555"></div><div class="t" style="left:48px;top:598.6px;width:60px;height:10px;text-align:center;font-size:9.6px;color:#000;letter-spacing:-.2px;transform:rotate(-90deg)">0</div><div class="a" style="left:92px;top:588px;width:3px;height:1px;background:#666"></div><div class="a" style="left:88px;top:572px;width:7px;height:1px;background:#555"></div><div class="t" style="left:48px;top:566.9px;width:60px;height:10px;text-align:center;font-size:9.6px;color:#000;letter-spacing:-.2px;transform:rotate(-90deg)">20</div><div class="a" style="left:92px;top:556px;width:3px;height:1px;background:#666"></div><div class="a" style="left:88px;top:540px;width:7px;height:1px;background:#555"></div><div class="t" style="left:48px;top:535.3px;width:60px;height:10px;text-align:center;font-size:9.6px;color:#000;letter-spacing:-.2px;transform:rotate(-90deg)">40</div><div class="a" style="left:92px;top:524px;width:3px;height:1px;background:#666"></div><div class="a" style="left:88px;top:509px;width:7px;height:1px;background:#555"></div><div class="t" style="left:48px;top:503.6px;width:60px;height:10px;text-align:center;font-size:9.6px;color:#000;letter-spacing:-.2px;transform:rotate(-90deg)">60</div><div class="a" style="left:92px;top:493px;width:3px;height:1px;background:#666"></div><div class="a" style="left:88px;top:477px;width:7px;height:1px;background:#555"></div><div class="t" style="left:48px;top:471.9px;width:60px;height:10px;text-align:center;font-size:9.6px;color:#000;letter-spacing:-.2px;transform:rotate(-90deg)">80</div><div class="a" style="left:92px;top:461px;width:3px;height:1px;background:#666"></div><div class="a" style="left:88px;top:445px;width:7px;height:1px;background:#555"></div><div class="t" style="left:48px;top:440.3px;width:60px;height:10px;text-align:center;font-size:9.6px;color:#000;letter-spacing:-.2px;transform:rotate(-90deg)">100</div><div class="a" style="left:92px;top:429px;width:3px;height:1px;background:#666"></div><div class="a" style="left:88px;top:414px;width:7px;height:1px;background:#555"></div><div class="t" style="left:48px;top:408.6px;width:60px;height:10px;text-align:center;font-size:9.6px;color:#000;letter-spacing:-.2px;transform:rotate(-90deg)">120</div><div class="a" style="left:92px;top:398px;width:3px;height:1px;background:#666"></div><div class="a" style="left:88px;top:382px;width:7px;height:1px;background:#555"></div><div class="t" style="left:48px;top:376.9px;width:60px;height:10px;text-align:center;font-size:9.6px;color:#000;letter-spacing:-.2px;transform:rotate(-90deg)">140</div><div class="a" style="left:92px;top:366px;width:3px;height:1px;background:#666"></div><div class="a" style="left:88px;top:350px;width:7px;height:1px;background:#555"></div><div class="t" style="left:48px;top:345.3px;width:60px;height:10px;text-align:center;font-size:9.6px;color:#000;letter-spacing:-.2px;transform:rotate(-90deg)">160</div><div class="a" style="left:92px;top:334px;width:3px;height:1px;background:#666"></div><div class="a" style="left:88px;top:319px;width:7px;height:1px;background:#555"></div><div class="t" style="left:48px;top:313.6px;width:60px;height:10px;text-align:center;font-size:9.6px;color:#000;letter-spacing:-.2px;transform:rotate(-90deg)">180</div><div class="a" style="left:92px;top:303px;width:3px;height:1px;background:#666"></div><div class="a" style="left:88px;top:287px;width:7px;height:1px;background:#555"></div><div class="t" style="left:48px;top:281.9px;width:60px;height:10px;text-align:center;font-size:9.6px;color:#000;letter-spacing:-.2px;transform:rotate(-90deg)">200</div><div class="a" style="left:92px;top:271px;width:3px;height:1px;background:#666"></div><div class="a" style="left:88px;top:255px;width:7px;height:1px;background:#555"></div><div class="t" style="left:48px;top:250.3px;width:60px;height:10px;text-align:center;font-size:9.6px;color:#000;letter-spacing:-.2px;transform:rotate(-90deg)">220</div><div class="a" style="left:92px;top:239px;width:3px;height:1px;background:#666"></div><div class="a" style="left:88px;top:224px;width:7px;height:1px;background:#555"></div><div class="t" style="left:48px;top:218.6px;width:60px;height:10px;text-align:center;font-size:9.6px;color:#000;letter-spacing:-.2px;transform:rotate(-90deg)">240</div><div class="a" style="left:92px;top:208px;width:3px;height:1px;background:#666"></div><div class="a" style="left:88px;top:192px;width:7px;height:1px;background:#555"></div><div class="t" style="left:48px;top:186.9px;width:60px;height:10px;text-align:center;font-size:9.6px;color:#000;letter-spacing:-.2px;transform:rotate(-90deg)">260</div><div class="a" style="left:92px;top:176px;width:3px;height:1px;background:#666"></div><div class="a" style="left:1137px;top:161px;width:17px;height:570px;background:#f9f9f9;border-left:1px solid #ececec"></div><div class="a" style="left:1142px;top:279px;width:8px;height:333px;background:#7b7b7b;border-radius:4px"></div><div class="a" style="left:95px;top:731px;width:1059px;height:17px;background:#f8f8f8"></div><div class="a" style="left:72px;top:731px;width:23px;height:17px;background:#fff"></div><div class="a" style="left:1085px;top:731px;width:69px;height:17px;background:#fff"></div><div class="t" style="left:1053px;width:100px;text-align:right;top:734.19px;font-size:13px;color:#111">10 &lt; 100</div><div class="a" style="left:72px;top:748px;width:1082px;height:1px;background:#c3c3c3"></div><div class="a" style="left:72px;top:749px;width:1082px;height:21px;background:#fff"></div><div class="t" style="left:77.5px;top:751.45px;font-size:13.4px;color:#1010d8;"><i>Commande:</i> printpreview</div><div class="a" style="left:72px;top:770px;width:1082px;height:1px;background:#c9c9c9"></div><div class="a" style="left:72px;top:771px;width:1082px;height:27px;background:#fff"></div><div class="t" style="left:73.5px;top:778.32px;font-size:13.2px;color:#111;">Commande :</div><div class="a" style="left:1127px;top:772px;width:26px;height:26px;background:#efefef;border:1px solid #bdbdbd"></div><svg style="left:1131px;top:777px;" width="18" height="14" viewBox="0 0 18 14"><rect x="1.5" y="1.5" width="15" height="11" fill="#fff" stroke="#111" stroke-width="1.2"/><rect x="1" y="1" width="16" height="3" fill="#111"/></svg><div class="a" style="left:0px;top:798px;width:1500px;height:46px;background:#dcdcdc"></div><div class="t" style="left:2px;top:807.28px;font-size:9.7px;color:#1a1a1a;">101.6,100.6</div><div class="t" style="left:2px;top:827.58px;font-size:9.7px;color:#1a1a1a;">@1.6,0.6</div><div class="a" style="left:254px;top:802px;width:1px;height:40px;background:#9a9a9a;box-shadow:1px 0 0 #f4f4f4"></div><div class="t" style="left:256px;top:807.28px;font-size:9.7px;color:#1a1a1a;">142.9787&lt;45°</div><div class="t" style="left:256px;top:827.58px;font-size:9.7px;color:#1a1a1a;">@1.7088&lt;21°</div><div class="a" style="left:507px;top:819px;width:6px;height:6px;background:#c4c4c4;border-radius:50%"></div><div class="a" style="left:940px;top:819px;width:6px;height:6px;background:#c4c4c4;border-radius:50%"></div><div class="a" style="left:1269px;top:819px;width:6px;height:6px;background:#c4c4c4;border-radius:50%"></div><div class="t" style="left:949px;top:817.16px;font-size:10.2px;color:#1a1a1a;">Aucune des entités sélectionnées.</div><svg style="left:717px;top:806px;" width="18" height="30" viewBox="0 0 18 30"><path d="M9 .7 Q17.2 .7 17.2 10 L17.2 20 Q17.2 29.3 9 29.3 Q.8 29.3 .8 20 L.8 10 Q.8 .7 9 .7Z" fill="#fff" stroke="#555" stroke-width=".9"/><path d="M.8 14 Q9 12 17.2 14" fill="none" stroke="#444" stroke-width="1.4"/><rect x="7.3" y="3.5" width="3.4" height="6.5" rx="1.6" fill="#fff" stroke="#444" stroke-width="1"/><path d="M9 .7 V3.5 M9 10 V13" stroke="#444" stroke-width="1"/></svg><div class="a" style="left:7px;top:122px;width:2px;height:2px;background:#9a9a9a"></div><div class="a" style="left:13px;top:122px;width:2px;height:2px;background:#9a9a9a"></div><div class="a" style="left:19px;top:122px;width:2px;height:2px;background:#9a9a9a"></div><div class="a" style="left:25px;top:122px;width:2px;height:2px;background:#9a9a9a"></div><div class="a" style="left:31px;top:122px;width:2px;height:2px;background:#9a9a9a"></div><div class="a" style="left:37px;top:122px;width:2px;height:2px;background:#9a9a9a"></div><div class="a" style="left:43px;top:122px;width:2px;height:2px;background:#9a9a9a"></div><div class="a" style="left:49px;top:122px;width:2px;height:2px;background:#9a9a9a"></div><div class="a" style="left:55px;top:122px;width:2px;height:2px;background:#9a9a9a"></div><div class="a" style="left:61px;top:122px;width:2px;height:2px;background:#9a9a9a"></div><div class="a" style="left:1px;top:126px;width:71px;height:26px;border:1.5px solid #8c8c8c;background:linear-gradient(#f0f0f0,#f6f6f6)"></div><svg style="left:30px;top:133px;" width="12" height="12" viewBox="0 0 12 12"><path d="M10 1 L10 10.5 L1.5 5.8Z" fill="#000"/></svg><div class="a" style="left:1px;top:162px;width:35px;height:35px;border:1.5px solid #8c8c8c;background:linear-gradient(#f3f3f3,#e8e8e8 50%,#f3f3f3)"></div><div class="a" style="left:36px;top:162px;width:36px;height:35px;border:1.5px solid #8c8c8c;background:linear-gradient(#f3f3f3,#e8e8e8 50%,#f3f3f3)"></div><div class="a" style="left:1px;top:197px;width:35px;height:35px;border:1.5px solid #8c8c8c;background:linear-gradient(#f3f3f3,#e8e8e8 50%,#f3f3f3)"></div><div class="a" style="left:1px;top:240px;width:35px;height:35px;border:1.5px solid #8c8c8c;background:linear-gradient(#f3f3f3,#e6e6e6 45%,#f4f4f4)"></div><div class="a" style="left:36px;top:240px;width:36px;height:35px;border:1.5px solid #8c8c8c;background:linear-gradient(#f3f3f3,#e6e6e6 45%,#f4f4f4)"></div><div class="a" style="left:1px;top:275px;width:35px;height:35px;border:1.5px solid #8c8c8c;background:linear-gradient(#f3f3f3,#e6e6e6 45%,#f4f4f4)"></div><div class="a" style="left:36px;top:275px;width:36px;height:35px;border:1.5px solid #8c8c8c;background:linear-gradient(#f3f3f3,#e6e6e6 45%,#f4f4f4)"></div><div class="a" style="left:1px;top:318px;width:35px;height:35px;border:1.5px solid #8c8c8c;background:linear-gradient(#f3f3f3,#e6e6e6 45%,#f4f4f4)"></div><svg style="left:1px;top:162px;" width="35" height="35" viewBox="0 0 35 35"><rect x="7" y="9.5" width="20.5" height="14" fill="none" stroke="#222" stroke-width="1.3"/><circle cx="7" cy="9.5" r="2.3" fill="#ff1010"/><circle cx="27.5" cy="23.5" r="2.3" fill="#ff1010"/></svg><svg style="left:36px;top:162px;" width="36" height="35" viewBox="0 0 36 35"><path d="M6.5 23.5 V9.5 H40" fill="none" stroke="#ff1010" stroke-width="1.3"/><path d="M6.5 23.5 H40" stroke="#222" stroke-width="1.3"/><circle cx="6.5" cy="9.5" r="2.3" fill="#ff1010"/></svg><svg style="left:1px;top:197px;" width="35" height="35" viewBox="0 0 35 35"><path d="M6.4 15.5 L20.6 7.4 L26 17 L12 25Z" fill="none" stroke="#222" stroke-width="1.3"/><circle cx="16" cy="10" r="2.3" fill="#ff1010"/><circle cx="26" cy="17" r="2.3" fill="#ff1010"/><circle cx="12" cy="25" r="2.3" fill="#ff1010"/></svg><svg style="left:1px;top:240px;" width="35" height="35" viewBox="0 0 35 35"><path d="M17.00 7.00 L26.99 14.26 L23.17 25.99 L10.83 25.99 L7.01 14.26Z" fill="none" stroke="#222" stroke-width="1.3"/><circle cx="17" cy="16.5" r="2.3" fill="#ff1010"/><circle cx="23.5" cy="26" r="2.3" fill="#ff1010"/></svg><svg style="left:36px;top:240px;" width="36" height="35" viewBox="0 0 36 35"><path d="M17.00 7.00 L26.99 14.26 L23.17 25.99 L10.83 25.99 L7.01 14.26Z" fill="none" stroke="#222" stroke-width="1.3"/><circle cx="10.5" cy="26" r="2.3" fill="#ff1010"/><circle cx="23.5" cy="26" r="2.3" fill="#ff1010"/></svg><svg style="left:1px;top:275px;" width="35" height="35" viewBox="0 0 35 35"><path d="M17.00 7.00 L26.99 14.26 L23.17 25.99 L10.83 25.99 L7.01 14.26Z" fill="none" stroke="#222" stroke-width="1.3"/><circle cx="17" cy="16.5" r="2.3" fill="#ff1010"/><circle cx="17" cy="26" r="2.3" fill="#ff1010"/></svg><svg style="left:36px;top:275px;" width="36" height="35" viewBox="0 0 36 35"><path d="M6 16.5 L11 8 L22 8 L27 16.5 L22 25 L11 25Z" fill="none" stroke="#222" stroke-width="1.3" transform="translate(.5 0)"/><circle cx="17" cy="8" r="2.3" fill="#ff1010"/><circle cx="17" cy="25.5" r="2.3" fill="#ff1010"/></svg><svg style="left:1px;top:318px;" width="35" height="35" viewBox="0 0 35 35"><path d="M17.00 6.50 L20.06 13.09 L27.27 13.96 L21.95 18.91 L23.35 26.04 L17.00 22.50 L10.65 26.04 L12.05 18.91 L6.73 13.96 L13.94 13.09Z" fill="none" stroke="#222" stroke-width="1.3"/><circle cx="17" cy="17" r="2.3" fill="#ff1010"/><circle cx="23.5" cy="26" r="2.3" fill="#ff1010"/></svg><div class="a" style="left:1154px;top:114px;width:301px;height:684px;background:#fff;border-left:1px solid #d8d8d8;border-right:1px solid #d8d8d8"></div><svg style="left:1157px;top:117px;" width="34" height="14" viewBox="0 0 34 14"><circle cx="7" cy="7" r="6.8" fill="#6b6b6b"/><path d="M4.3 4.3 L9.7 9.7 M9.7 4.3 L4.3 9.7" stroke="#fff" stroke-width="1.8"/><circle cx="25" cy="7" r="6.8" fill="#6b6b6b"/><rect x="21.3" y="6.5" width="5.5" height="4" fill="none" stroke="#fff" stroke-width="1.2"/><path d="M23.3 6.5 V4 H28.8 V8 H26.8" fill="none" stroke="#fff" stroke-width="1.2"/></svg><div class="t" style="left:1276.5px;top:118.84px;font-size:12px;color:#2a2a2a;">Liste des calques</div><div class="a" style="left:1155px;top:135px;width:300px;height:2px;background:#e8e8e8"></div><div class="a" style="left:1155px;top:136px;width:300px;height:26px;border:2px solid #b5b5b5;background:linear-gradient(#ececec,#f4f4f4)"></div><div class="a" style="left:1214px;top:136px;width:2px;height:26px;background:#b5b5b5"></div><div class="a" style="left:1274px;top:136px;width:2px;height:26px;background:#b5b5b5"></div><div class="a" style="left:1334px;top:136px;width:2px;height:26px;background:#b5b5b5"></div><div class="a" style="left:1394px;top:136px;width:2px;height:26px;background:#b5b5b5"></div><svg style="left:0px;top:0px;" width="1500" height="844" viewBox="0 0 1500 844"><g transform="translate(1185 149) scale(1.0)"><path d="M-7.5 0 Q-4 -5.5 0 -5.5 Q4 -5.5 7.5 0 Q4 5.5 0 5.5 Q-4 5.5 -7.5 0Z" fill="#000"/><path d="M-5 0.5 Q-2.5 3.8 0 3.8 Q2.5 3.8 5 0.5 Q2.5 -2 0 -2 Q-2.5 -2 -5 0.5Z" fill="#fff"/><circle cx="0" cy="0.6" r="2.2" fill="#000"/></g><g transform="translate(1245 149) scale(1.0)"><path d="M-7.5 0 Q-4 -5.5 0 -5.5 Q4 -5.5 7.5 0 Q4 5.5 0 5.5 Q-4 5.5 -7.5 0Z" fill="#9c9c9c"/><path d="M-5 0.5 Q-2.5 3.8 0 3.8 Q2.5 3.8 5 0.5 Q2.5 -2 0 -2 Q-2.5 -2 -5 0.5Z" fill="#fff"/><circle cx="0" cy="0.6" r="2.2" fill="#9c9c9c"/></g><path d="M1304.5 142.5 V156 M1298 149.2 H1311" stroke="#e00" stroke-width="3"/><path d="M1358.5 149.2 H1371" stroke="#e00" stroke-width="3"/><line x1="1418.5" y1="155.5" x2="1431" y2="142.5" stroke="#8a5a10" stroke-width="3.6" stroke-linecap="round"/><line x1="1418.5" y1="155.5" x2="1431" y2="142.5" stroke="#e6a83a" stroke-width="2.4"/><line x1="1428.75" y1="144.84" x2="1431" y2="142.5" stroke="#e21" stroke-width="3"/><line x1="1395" y1="179" x2="1407.5" y2="166.5" stroke="#8a5a10" stroke-width="3.6" stroke-linecap="round"/><line x1="1395" y1="179" x2="1407.5" y2="166.5" stroke="#e6a83a" stroke-width="2.4"/><line x1="1405.25" y1="168.75" x2="1407.5" y2="166.5" stroke="#e21" stroke-width="3"/><g transform="translate(1423 173) scale(1.0)"><path d="M-7.5 0 Q-4 -5.5 0 -5.5 Q4 -5.5 7.5 0 Q4 5.5 0 5.5 Q-4 5.5 -7.5 0Z" fill="#000"/><path d="M-5 0.5 Q-2.5 3.8 0 3.8 Q2.5 3.8 5 0.5 Q2.5 -2 0 -2 Q-2.5 -2 -5 0.5Z" fill="#fff"/><circle cx="0" cy="0.6" r="2.2" fill="#000"/></g><rect x="1440" y="172" width="10" height="8" fill="#b8b8b8"/><path d="M1442 172.5 V169.5 Q1442 166.3 1445 166.3 Q1448 166.3 1448 169.5 V172.5" fill="none" stroke="#b8b8b8" stroke-width="1.6"/><rect x="1181.5" y="169.5" width="15" height="8" fill="none" stroke="#111" stroke-width="1.2"/></svg><div class="t" style="left:1203.5px;top:166.96px;font-size:12.8px;color:#111;">0</div><div class="a" style="left:1455px;top:114px;width:45px;height:684px;background:linear-gradient(90deg,#dedede 0,#f3f3f3 1px,#ebebeb 3px,#d6d6d6 80%,#cbcbcb 93%,#b9b9b9)"></div><div class="a" style="left:1463px;top:122px;width:2px;height:2px;background:#9c9c9c"></div><div class="a" style="left:1469px;top:122px;width:2px;height:2px;background:#9c9c9c"></div><div class="a" style="left:1475px;top:122px;width:2px;height:2px;background:#9c9c9c"></div><div class="a" style="left:1481px;top:122px;width:2px;height:2px;background:#9c9c9c"></div><div class="a" style="left:1487px;top:122px;width:2px;height:2px;background:#9c9c9c"></div><div class="a" style="left:1456px;top:126px;width:42px;height:43px;background:#b9b9b9;border-radius:6px"></div><div class="a" style="left:1456px;top:423px;width:42px;height:43px;background:#b9b9b9;border-radius:6px"></div><div class="a" style="left:1460px;top:267px;width:38px;height:1px;background:repeating-linear-gradient(90deg,#333 0 1px,transparent 1px 3px)"></div><div class="a" style="left:1460px;top:415px;width:38px;height:1px;background:repeating-linear-gradient(90deg,#333 0 1px,transparent 1px 3px)"></div><svg style="left:1463px;top:133px;" width="29" height="29" viewBox="0 0 29 29"><rect x=".5" y=".5" width="27.5" height="27.5" fill="#fff" stroke="#222" stroke-width="1"/><rect x=".5" y=".5" width="27.5" height="4.5" fill="#000"/><rect x="1.5" y="1.3" width="3" height="3" fill="#fff"/><path d="M8 12 L13 10 L13 22 L8 24Z" fill="#999" stroke="#555" stroke-width=".6"/><path d="M10 11 L16 9 L16 21 L10 23Z" fill="#aaa" stroke="#555" stroke-width=".6"/><path d="M13 10 L22 7 L22 19 L13 22Z" fill="#fff" stroke="#555" stroke-width=".8"/><path d="M15 19 L19 11 L19.5 18Z" fill="none" stroke="#f33" stroke-width=".9"/></svg><svg style="left:1463px;top:180px;" width="29" height="29" viewBox="0 0 29 29"><rect x=".5" y=".5" width="27.5" height="27.5" fill="#fff" stroke="#222" stroke-width="1"/><rect x=".5" y=".5" width="27.5" height="4.5" fill="#000"/><rect x="1.5" y="1.3" width="3" height="3" fill="#fff"/><rect x="7" y="9" width="12" height="9" fill="#f4e8b0" stroke="#555" stroke-width=".8"/><circle cx="18" cy="18" r="5" fill="#f4e8b0" fill-opacity=".8" stroke="#555" stroke-width=".8"/></svg><svg style="left:1463px;top:226px;" width="29" height="29" viewBox="0 0 29 29"><rect x=".5" y=".5" width="27.5" height="27.5" fill="#fff" stroke="#222" stroke-width="1"/><rect x=".5" y=".5" width="27.5" height="4.5" fill="#000"/><rect x="1.5" y="1.3" width="3" height="3" fill="#fff"/><rect x="5.5" y="10" width="17" height="12" rx="2" fill="#f6f6f6" stroke="#c8d4ea" stroke-width="1"/></svg><svg style="left:1463px;top:282px;" width="29" height="29" viewBox="0 0 29 29"><rect x=".5" y=".5" width="27.5" height="27.5" fill="#fff" stroke="#222" stroke-width="1"/><rect x=".5" y=".5" width="27.5" height="4.5" fill="#000"/><rect x="1.5" y="1.3" width="3" height="3" fill="#fff"/><rect x="4" y="9" width="4" height="3" fill="#000"/><rect x="4" y="15" width="4" height="3" fill="#000"/><rect x="4" y="21" width="4" height="3" fill="#000"/><rect x="10.5" y="9.3" width="14" height="2.6" fill="none" stroke="#333" stroke-width=".7"/><rect x="10.5" y="15.3" width="14" height="2.6" fill="none" stroke="#333" stroke-width=".7"/><rect x="10.5" y="21.3" width="14" height="2.6" fill="none" stroke="#333" stroke-width=".7"/></svg><svg style="left:1463px;top:328px;" width="29" height="29" viewBox="0 0 29 29"><rect x=".5" y=".5" width="27.5" height="27.5" fill="#fff" stroke="#222" stroke-width="1"/><rect x=".5" y=".5" width="27.5" height="4.5" fill="#000"/><rect x="1.5" y="1.3" width="3" height="3" fill="#fff"/><path d="M6 10 Q14 7 22 10 L16 17 L16 24 L13 25 L13 17Z" fill="#888" stroke="#444" stroke-width=".7"/><ellipse cx="14" cy="10" rx="8" ry="1.8" fill="#bbb"/></svg><svg style="left:1463px;top:374px;" width="29" height="29" viewBox="0 0 29 29"><rect x=".5" y=".5" width="27.5" height="27.5" fill="#fff" stroke="#222" stroke-width="1"/><rect x=".5" y=".5" width="27.5" height="4.5" fill="#000"/><rect x="1.5" y="1.3" width="3" height="3" fill="#fff"/><path d="M6 9 L11 14 L11 20 L6 25Z" fill="#ddd" stroke="#333" stroke-width=".8"/><rect x="11" y="13" width="11" height="8" rx="1" fill="#999" stroke="#555" stroke-width=".6"/><path d="M3 17 H26" stroke="#f99" stroke-width=".8" stroke-dasharray="1.5 1"/></svg><svg style="left:1463px;top:430px;" width="29" height="29" viewBox="0 0 29 29"><rect x=".5" y=".5" width="27.5" height="27.5" fill="#fff" stroke="#222" stroke-width="1"/><rect x=".5" y=".5" width="27.5" height="4.5" fill="#000"/><rect x="1.5" y="1.3" width="3" height="3" fill="#fff"/><rect x="1" y="5" width="26.5" height="17" fill="#f8fcff"/><path d="M3 8 h8 M3 11 h7 M3 14 h9 M3 17 h10" stroke="#777" stroke-width=".6"/><path d="M1 23 H28" stroke="#333" stroke-width=".6"/><path d="M3 25.5 h2 M8 25.5 h16" stroke="#555" stroke-width=".6"/></svg><svg style="left:1463px;top:477px;" width="29" height="29" viewBox="0 0 29 29"><rect x=".5" y=".5" width="27.5" height="27.5" fill="#fff" stroke="#222" stroke-width="1"/><rect x=".5" y=".5" width="27.5" height="4.5" fill="#000"/><rect x="1.5" y="1.3" width="3" height="3" fill="#fff"/><rect x="8" y="9" width="13" height="16" rx="1" fill="#b07a2a"/><rect x="9.5" y="11" width="10" height="12.5" fill="#f2f2f2"/><rect x="11.5" y="8" width="6" height="3" fill="#888"/><path d="M11 14h7 M11 16.5h7 M11 19h7" stroke="#bbb" stroke-width=".7"/></svg><div class="t" style="left:14px;top:3.73px;font-size:13.3px;color:#262626;">Fichier</div><div class="t" style="left:68px;top:3.73px;font-size:13.3px;color:#262626;">Édition</div><div class="t" style="left:120px;top:3.73px;font-size:13.3px;color:#262626;">Affichage</div><div class="t" style="left:190px;top:3.73px;font-size:13.3px;color:#262626;">Sélectionner</div><div class="t" style="left:277px;top:3.73px;font-size:13.3px;color:#262626;">Dessin</div><div class="t" style="left:330px;top:3.73px;font-size:13.3px;color:#262626;">Cotation</div><div class="t" style="left:394px;top:3.73px;font-size:13.3px;color:#262626;">Modifier</div><div class="t" style="left:455px;top:3.73px;font-size:13.3px;color:#262626;">Accrochage</div><div class="t" style="left:539px;top:3.73px;font-size:13.3px;color:#262626;">Infos</div><div class="t" style="left:580px;top:3.73px;font-size:13.3px;color:#262626;">Calque</div><div class="t" style="left:634px;top:3.73px;font-size:13.3px;color:#262626;">Bloc</div><div class="t" style="left:673px;top:3.73px;font-size:13.3px;color:#262626;">Fenêtre</div><div class="t" style="left:731px;top:3.73px;font-size:13.3px;color:#262626;">Divers</div><div class="t" style="left:781px;top:3.73px;font-size:13.3px;color:#262626;">Aide</div><div class="a" style="left:61px;top:30px;width:281px;height:504px;background:#fff;border-radius:5px;box-shadow:0 6px 6px -6px rgba(0,0,0,.25)"></div><div class="t" style="left:101px;top:35.57px;font-size:13.5px;color:#1e1e1e;">Annuler [Rectangle (taille) (RS)] (OO)</div><svg style="left:81px;top:36px;" width="16" height="16" viewBox="0 0 16 16"><g transform="translate(0 1) scale(.5)"><path d="M2.7 6.5 L2.7 20.5 L16 20.5 L11.3 15.8 Q15.5 10.5 20 10.5 Q25.5 10.5 25.7 16 Q25.7 23 14.5 27.3 Q30.8 26 31 16 Q31 5.7 20 5.5 Q13 5.5 7.5 11.3Z" fill="#3aa94c" stroke="#1d7f30" stroke-width="1.2" stroke-linejoin="round"/></g></svg><div class="t" style="left:101px;top:55.57px;font-size:13.5px;color:#bdbdbd;">Rétablir [-] (UU)</div><svg style="left:81px;top:56px;" width="16" height="16" viewBox="0 0 16 16"><g opacity=".5" transform="translate(16 1) scale(-.5 .5)"><path d="M2.7 6.5 L2.7 20.5 L16 20.5 L11.3 15.8 Q15.5 10.5 20 10.5 Q25.5 10.5 25.7 16 Q25.7 23 14.5 27.3 Q30.8 26 31 16 Q31 5.7 20 5.5 Q13 5.5 7.5 11.3Z" fill="#7cc583" stroke="#1d7f30" stroke-width="1.2" stroke-linejoin="round"/></g></svg><div class="a" style="left:61px;top:79px;width:281px;height:2px;background:#e5e5e5"></div><div class="t" style="left:101px;top:87.57px;font-size:13.5px;color:#bdbdbd;">Supprimer (ER)</div><svg style="left:81px;top:88px;" width="16" height="16" viewBox="0 0 16 16"><g opacity="0.62"><path d="M3 11.5 L11.5 3 Q12.5 2 13.5 3 L15 4.5 Q16 5.5 15 6.5 L6.5 15Z" fill="#e05a5a"/><path d="M4.8 12.2 L13.2 3.8" stroke="#fff" stroke-width="1.3"/><path d="M3 11.5 L5 9.5 L8.5 13 L6.5 15 Q5.5 16 4.5 15 L2.5 13 Q2 12 3 11.5Z" fill="#f2f2f2" stroke="#aaa" stroke-width=".5"/></g></svg><div class="a" style="left:61px;top:111px;width:281px;height:2px;background:#e5e5e5"></div><div class="t" style="left:101px;top:119.57px;font-size:13.5px;color:#bdbdbd;">Couper</div><svg style="left:81px;top:120px;" width="16" height="16" viewBox="0 0 16 16"><g opacity=".8"><path d="M7.6 2.5 L9 2 L9.3 10.8 L7.8 11Z" fill="#fafafa" stroke="#b5b5b5" stroke-width=".6"/><path d="M8.5 9.8 L14 5.8 L14.8 7 L9.2 11Z" fill="#fafafa" stroke="#b5b5b5" stroke-width=".6"/><ellipse cx="4" cy="11.2" rx="2.7" ry="1.5" transform="rotate(-25 4 11.2)" fill="none" stroke="#e35d5d" stroke-width="1.1"/><ellipse cx="9.4" cy="14.5" rx="1.4" ry="2.5" transform="rotate(-10 9.4 14.5)" fill="none" stroke="#e35d5d" stroke-width="1.1"/></g></svg><div class="t" style="left:101px;top:139.57px;font-size:13.5px;color:#bdbdbd;">Couper avec référence (RT)</div><svg style="left:81px;top:140px;" width="16" height="16" viewBox="0 0 16 16"><g opacity=".8"><path d="M7.6 2.5 L9 2 L9.3 10.8 L7.8 11Z" fill="#fafafa" stroke="#b5b5b5" stroke-width=".6"/><path d="M8.5 9.8 L14 5.8 L14.8 7 L9.2 11Z" fill="#fafafa" stroke="#b5b5b5" stroke-width=".6"/><ellipse cx="4" cy="11.2" rx="2.7" ry="1.5" transform="rotate(-25 4 11.2)" fill="none" stroke="#e35d5d" stroke-width="1.1"/><ellipse cx="9.4" cy="14.5" rx="1.4" ry="2.5" transform="rotate(-10 9.4 14.5)" fill="none" stroke="#e35d5d" stroke-width="1.1"/></g><path d="M.5 13.5 h3 M2 12 v3" stroke="#666" stroke-width=".8"/></svg><div class="t" style="left:101px;top:159.57px;font-size:13.5px;color:#bdbdbd;">Copier (CP)</div><svg style="left:81px;top:160px;" width="16" height="16" viewBox="0 0 16 16"><g opacity=".55"><rect x=".5" y="1" width="10.5" height="11.5" fill="#fbfbfb" stroke="#c2c2c2" stroke-width=".7"/><path d="M4.8 4 L15 4 L15.5 4.5 L15.5 14.5 L14 16 L4.8 16Z" fill="#f8f8f8" stroke="#b0b0b0" stroke-width=".7"/><path d="M7 7h6.5 M7 9.2h6.5 M7 11.4h6.5" stroke="#c8c8c8" stroke-width=".7"/></g></svg><div class="t" style="left:101px;top:179.57px;font-size:13.5px;color:#bdbdbd;">Copier avec référence (RC)</div><svg style="left:81px;top:180px;" width="16" height="16" viewBox="0 0 16 16"><g opacity=".55"><rect x=".5" y="1" width="10.5" height="11.5" fill="#fbfbfb" stroke="#c2c2c2" stroke-width=".7"/><path d="M4.8 4 L15 4 L15.5 4.5 L15.5 14.5 L14 16 L4.8 16Z" fill="#f8f8f8" stroke="#b0b0b0" stroke-width=".7"/><path d="M7 7h6.5 M7 9.2h6.5 M7 11.4h6.5" stroke="#c8c8c8" stroke-width=".7"/></g><path d="M.5 14 h3 M2 12.5 v3" stroke="#777" stroke-width=".8"/></svg><div class="t" style="left:101px;top:199.57px;font-size:13.5px;color:#1e1e1e;">Coller (PS)</div><svg style="left:81px;top:200px;" width="16" height="16" viewBox="0 0 16 16"><rect x="1.5" y="1.5" width="13" height="14.5" rx="1" fill="#b07a2a" stroke="#8a5c18" stroke-width=".5"/><rect x="3" y="3.2" width="10" height="11.3" fill="#f2f2f2"/><rect x="5" y="0.3" width="6" height="3" rx=".8" fill="#8d8d80"/><path d="M4.5 6.5h7 M4.5 8.5h7 M4.5 10.5h7 M4.5 12.5h5" stroke="#b5b5b5" stroke-width=".7"/><path d="M10.5 14.5 L13 12 L13 14.5Z" fill="#888"/></svg><div class="t" style="left:101px;top:219.57px;font-size:13.5px;color:#1e1e1e;">Coller le long de l’entité (PE)</div><svg style="left:81px;top:220px;" width="16" height="16" viewBox="0 0 16 16"><rect x="3" y="1.5" width="10" height="11" rx="1" fill="#b8802a"/><rect x="4.3" y="3" width="7.4" height="8.5" fill="#f4f4f4"/><rect x="5.5" y="0.5" width="5" height="2.5" rx="1" fill="#888"/><path d="M2.5 15h11" stroke="#e02020" stroke-width="1.3" stroke-dasharray="2 1.5"/></svg><div class="t" style="left:101px;top:239.57px;font-size:13.5px;color:#bdbdbd;">Dupliquer (DP)</div><svg style="left:81px;top:240px;" width="16" height="16" viewBox="0 0 16 16"><g opacity=".55"><rect x=".5" y="1" width="10.5" height="11.5" fill="#fbfbfb" stroke="#c2c2c2" stroke-width=".7"/><path d="M4.8 4 L15 4 L15.5 4.5 L15.5 14.5 L14 16 L4.8 16Z" fill="#f8f8f8" stroke="#b0b0b0" stroke-width=".7"/><path d="M7 7h6.5 M7 9.2h6.5 M7 11.4h6.5" stroke="#c8c8c8" stroke-width=".7"/></g><path d="M1.5 12.5 Q3 15.5 7.5 14.5" fill="none" stroke="#5cb85c" stroke-width="1.3" opacity=".65"/><path d="M6.5 12.8 L9 14.3 L6.6 16Z" fill="#5cb85c" opacity=".65"/></svg><div class="a" style="left:61px;top:263px;width:281px;height:2px;background:#e5e5e5"></div><div class="t" style="left:101px;top:271.57px;font-size:13.5px;color:#1e1e1e;">Modification rapide</div><svg style="left:81px;top:272px;" width="16" height="16" viewBox="0 0 16 16"></svg><svg style="left:321px;top:275px;" width="10" height="10" viewBox="0 0 10 10"><path d="M1 0 L9 5 L1 10Z" fill="#222"/></svg><div class="a" style="left:61px;top:295px;width:281px;height:2px;background:#e5e5e5"></div><div class="t" style="left:101px;top:303.57px;font-size:13.5px;color:#1e1e1e;">Rechercher / Remplacer... (RP)</div><svg style="left:81px;top:304px;" width="16" height="16" viewBox="0 0 16 16"><text x=".6" y="7.8" font-size="9.8" font-family="Liberation Sans" fill="#222">A</text><text x="8.8" y="14.8" font-size="10.8" font-family="Liberation Sans" fill="#222">B</text><path d="M7.5 2.5 Q11 2.2 12.8 5" fill="none" stroke="#222" stroke-width=".9"/><path d="M11.6 4.2 L13.6 6.6 L13.8 3.6Z" fill="#222"/></svg><div class="t" style="left:101px;top:323.57px;font-size:13.5px;color:#1e1e1e;">Substituer les polices... (FF)</div><svg style="left:81px;top:324px;" width="16" height="16" viewBox="0 0 16 16"><text x=".6" y="7.8" font-size="9.8" font-family="Liberation Sans" fill="#222">A</text><text x="8.6" y="14.8" font-size="11" font-family="Liberation Serif" font-style="italic" fill="#222">A</text><path d="M7.5 2.5 Q11 2.2 12.8 5" fill="none" stroke="#222" stroke-width=".9"/><path d="M11.6 4.2 L13.6 6.6 L13.8 3.6Z" fill="#222"/></svg><div class="t" style="left:101px;top:343.57px;font-size:13.5px;color:#1e1e1e;">Échelle hauteur du texte... (MG)</div><svg style="left:81px;top:344px;" width="16" height="16" viewBox="0 0 16 16"><text x=".2" y="14.6" font-size="13.4" font-family="Liberation Sans" fill="#222">A</text><text x="10.3" y="14.6" font-size="6.5" font-family="Liberation Sans" fill="#222">A</text><path d="M9.5 6 Q12 5.6 13 8" fill="none" stroke="#222" stroke-width=".8"/><path d="M12 7.2 L13.6 9.2 L13.8 6.6Z" fill="#222"/></svg><div class="a" style="left:61px;top:367px;width:281px;height:2px;background:#e5e5e5"></div><div class="t" style="left:101px;top:375.57px;font-size:13.5px;color:#1e1e1e;">Convertir unité de dessin (CU)</div><svg style="left:81px;top:376px;" width="16" height="16" viewBox="0 0 16 16"><text x="1" y="5" font-size="5.6" font-family="Liberation Sans" fill="#333">in</text><text x="1" y="10" font-size="5.6" font-family="Liberation Sans" fill="#333">m</text><text x=".6" y="15" font-size="5.6" font-family="Liberation Sans" fill="#333">mm</text><rect x="11.3" y=".8" width="3.6" height="14.4" fill="#fafafa" stroke="#aaa" stroke-width=".7"/><path d="M12 5 h1.2 M12 8 h1.6 M12 11 h1.2" stroke="#aaa" stroke-width=".5"/></svg><div class="a" style="left:61px;top:399px;width:281px;height:2px;background:#e5e5e5"></div><div class="t" style="left:101px;top:407.57px;font-size:13.5px;color:#1e1e1e;">Clic gauche</div><div class="a" style="left:61px;top:431px;width:281px;height:2px;background:#e5e5e5"></div><div class="t" style="left:101px;top:439.57px;font-size:13.5px;color:#1e1e1e;">Échapement</div><div class="t" style="left:101px;top:459.57px;font-size:13.5px;color:#1e1e1e;">Réinitialisé (QQ)</div><svg style="left:81px;top:460px;" width="16" height="16" viewBox="0 0 16 16"><path d="M4 3 L4 13 L6.5 10.5 L8.5 14.5 L10 13.8 L8 10 L11.5 10Z" fill="#fff" stroke="#777" stroke-width=".8"/></svg><div class="a" style="left:61px;top:483px;width:281px;height:2px;background:#e5e5e5"></div><div class="t" style="left:101px;top:491.57px;font-size:13.5px;color:#1e1e1e;">Préférences de dessin...</div><svg style="left:81px;top:492px;" width="16" height="16" viewBox="0 0 16 16"><rect x="1.5" y="0.5" width="13" height="15" fill="#eee" stroke="#aaa" stroke-width=".8"/><path d="M4 13 L11 6" stroke="#3a6fc2" stroke-width="2"/><path d="M5 4 L12 11" stroke="#888" stroke-width="1.5"/><path d="M10 3 L13 5" stroke="#333" stroke-width="1.3"/></svg><div class="a" style="left:61px;top:510px;width:281px;height:20px;background:#6b77d9"></div><div class="t" style="left:101px;top:511.57px;font-size:13.5px;color:#fde3e6;">Préférences d&#39;application...</div><svg style="left:81px;top:512px;" width="16" height="16" viewBox="0 0 16 16"><path d="M3 14 L12 5" stroke="#6f6a8a" stroke-width="2.2"/><path d="M10.5 3 L14 6.5" stroke="#7a5040" stroke-width="2.4"/><path d="M4.5 4 L13 13" stroke="#d8b8a0" stroke-width="1.8"/><path d="M2.5 2 Q1.5 5 4.5 5.5 L6 4 Q5.5 1 2.5 2Z" fill="#d8b8a0"/></svg><div class="a" style="left:61px;top:0px;width:53px;height:20px;background:rgba(255,120,120,.25)"></div><div class="a" style="left:52px;top:19px;width:71px;height:2px;background:linear-gradient(90deg,transparent,rgba(255,80,80,.6) 12%,rgba(255,80,80,.6) 88%,transparent)"></div><div class="a" style="left:60px;top:0px;width:2px;height:29px;background:linear-gradient(rgba(255,80,80,.6),rgba(255,80,80,.6) 70%,transparent)"></div><div class="a" style="left:113px;top:0px;width:2px;height:29px;background:linear-gradient(rgba(255,80,80,.6),rgba(255,80,80,.6) 70%,transparent)"></div><div class="a" style="left:61px;top:0px;width:53px;height:1px;background:rgba(255,80,80,.6)"></div><div class="a" style="left:52px;top:509px;width:299px;height:2px;background:linear-gradient(90deg,transparent,rgba(255,80,80,.6) 4%,rgba(255,80,80,.6) 96%,transparent)"></div><div class="a" style="left:52px;top:529px;width:299px;height:2px;background:linear-gradient(90deg,transparent,rgba(255,80,80,.6) 4%,rgba(255,80,80,.6) 96%,transparent)"></div><div class="a" style="left:60px;top:500px;width:2px;height:39px;background:linear-gradient(transparent,rgba(255,80,80,.6) 25%,rgba(255,80,80,.6) 75%,transparent)"></div><div class="a" style="left:341px;top:500px;width:2px;height:39px;background:linear-gradient(transparent,rgba(255,80,80,.6) 25%,rgba(255,80,80,.6) 75%,transparent)"></div><div class="a" style="left:162px;top:480px;width:78px;height:78px;border-radius:50%;border:5px solid rgba(125,155,185,.55);box-shadow:0 0 2px 1px rgba(140,165,190,.35),inset 0 0 3px 2px rgba(255,255,255,.55);background:rgba(215,225,235,.10)"></div><div class="a" style="left:164px;top:482px;width:74px;height:74px;border-radius:50%;border:1px solid rgba(110,140,170,.35)"></div><svg style="left:199px;top:517px;" width="20" height="32" viewBox="0 0 20 32"><g transform="translate(.3 .2) scale(1.1)"><path d="M1.8 1.8 L1.8 23 L6.8 18.2 L10.4 26.8 L13.9 25.3 L10.4 17.2 L17.1 17.2Z" fill="#fff" stroke="#000" stroke-width="1.4" stroke-linejoin="round"/></g></svg></body></html>
